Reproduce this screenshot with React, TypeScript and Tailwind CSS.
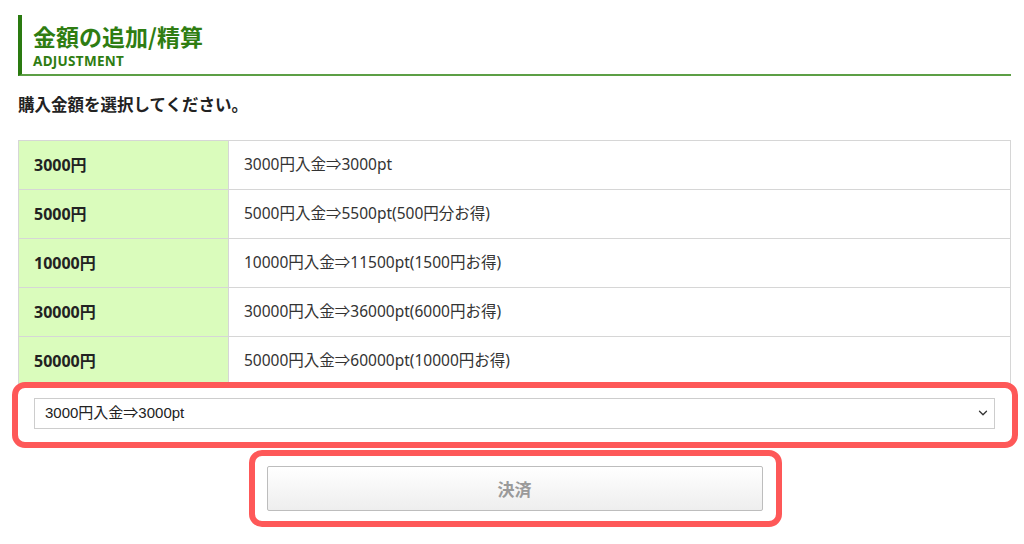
import React from 'react';
import { ChevronDown } from 'lucide-react';

interface Plan {
  amount: string;
  detail: string;
}

const plans: Plan[] = [
  { amount: '3000円', detail: '3000円入金⇒3000pt' },
  { amount: '5000円', detail: '5000円入金⇒5500pt(500円分お得)' },
  { amount: '10000円', detail: '10000円入金⇒11500pt(1500円お得)' },
  { amount: '30000円', detail: '30000円入金⇒36000pt(6000円お得)' },
  { amount: '50000円', detail: '50000円入金⇒60000pt(10000円お得)' },
];

const jp = { fontFamily: '"Noto Sans", "Noto Sans CJK JP", sans-serif' };
const sel = { fontFamily: '"Liberation Sans", "Noto Sans CJK JP", sans-serif' };

const App = () => {
  return (
    <div className="w-[1024px] h-[544px] bg-white overflow-hidden" style={jp}>
      <div className="relative ml-[18px] w-[993px] pt-[15px]">
        {/* heading */}
        <div className="h-[61px] border-l-4 border-b-2 border-l-[#2a7a10] border-b-[#5c9f45] pl-[11px] pt-[7px]">
          <h2 className="text-[23px] leading-[28px] font-bold text-[#2f7d12]" style={{ fontFamily: '"Noto Sans CJK JP", sans-serif' }}>
            金額の追加/精算
          </h2>
          <p className="mt-[3px] text-[13.5px] leading-[16px] font-bold text-[#2f7d12] tracking-[0.3px]">ADJUSTMENT</p>
        </div>

        <p className="mt-[16px] text-[16.5px] leading-[24px] font-bold text-[#222]" style={{ fontFamily: '"Noto Sans CJK JP", sans-serif' }}>
          購入金額を選択してください。
        </p>

        {/* plans */}
        <div className="mt-[24px] border-t border-x border-[#d6d6d6]">
          {plans.map(p => (
            <div key={p.amount} className="flex h-[49px] border-b border-[#d6d6d6]">
              <div className="w-[210px] flex items-center pl-[15px] bg-[#dafcbc] border-r border-[#d6d6d6] text-[16px] font-bold text-[#222]">
                {p.amount}
              </div>
              <div className="flex-1 flex items-center pl-[15px] text-[15.5px] text-[#333]">{p.detail}</div>
            </div>
          ))}
        </div>

        {/* select */}
        <div className="relative mt-[12px] mx-[16px] h-[31px]">
          <select
            className="w-full h-full appearance-none border border-[#cdcdcd] bg-white pl-[10px] text-[15px] text-[#222] outline-none"
            style={sel}
            defaultValue={plans[0].detail}
          >
            {plans.map(p => (
              <option key={p.amount}>{p.detail}</option>
            ))}
          </select>
          <ChevronDown className="absolute right-[5px] top-[8px] w-[14px] h-[14px] text-[#333] pointer-events-none" strokeWidth={2.2} />
        </div>

        {/* button */}
        <div className="mt-[37px] flex justify-center">
          <button
            className="w-[496px] h-[45px] rounded-[2px] border border-[#bdbdbd] bg-gradient-to-b from-white to-[#eeeeee] text-[17px] font-bold text-[#9a9a9a] shadow-[inset_0_1px_0_#fff]"
            style={{ fontFamily: '"Noto Sans CJK JP", sans-serif' }}
          >
            決済
          </button>
        </div>

        {/* annotation boxes */}
        <div className="absolute left-[-6px] top-[382px] w-[1006px] h-[66px] rounded-[13px] border-[6px] border-[#fe5858] pointer-events-none"></div>
        <div className="absolute left-[231px] top-[450px] w-[533px] h-[77px] rounded-[13px] border-[6px] border-[#fe5858] pointer-events-none"></div>
      </div>
    </div>
  );
};

export default App;
